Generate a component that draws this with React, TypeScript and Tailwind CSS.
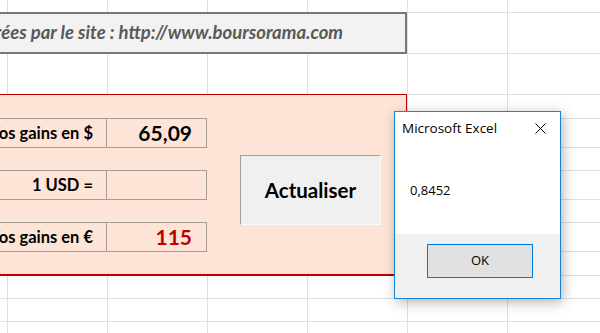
import React from "react";

const rowHeights = [13, 41, 41, 24, 29, 23, 29, 23, 29, 24, 23, 23, 12];
const colWidths = [8, 100, 100, 100, 100, 100, 100];

function Grid() {
  const cells: React.ReactNode[] = [];
  rowHeights.forEach((h, r) => {
    colWidths.forEach((w, c) => {
      cells.push(
        <div
          key={`${r}-${c}`}
          className="border-r border-b border-[#e0e0e0] box-border"
          style={{ width: w, height: h }}
        />
      );
    });
  });
  return (
    <div
      className="grid"
      style={{
        gridTemplateColumns: colWidths.map((w) => `${w}px`).join(" "),
        gridTemplateRows: rowHeights.map((h) => `${h}px`).join(" "),
      }}
    >
      {cells}
    </div>
  );
}

const calibri = { fontFamily: "Lato, 'Open Sans', sans-serif" };
const segoe = { fontFamily: "'Segoe UI', 'Open Sans', 'Noto Sans', sans-serif" };

function Row({ label, value, red }: { label: string; value: string; red?: boolean }) {
  return (
    <div className="flex h-[30px]">
      <div className="w-[200px] h-full border-t border-b border-r border-[#a79d96] flex items-center justify-end pr-[13px]">
        <span className="text-[16.5px] font-bold text-black whitespace-nowrap" style={calibri}>
          {label}
        </span>
      </div>
      <div className="w-[100px] h-full border-t border-b border-r border-[#a79d96] flex items-center justify-end pr-[14px]">
        <span
          className={`text-[21px] font-bold whitespace-nowrap ${red ? "text-[#c00000]" : "text-black"}`}
          style={calibri}
        >
          {value}
        </span>
      </div>
    </div>
  );
}

export default function App() {
  return (
    <div className="relative w-[600px] h-[333px] overflow-hidden bg-white">
      <Grid />

      {/* Banner shape */}
      <div className="absolute left-[-250px] top-[12px] w-[657px] h-[42px] bg-[#f2f2f2] border-2 border-[#777777] flex items-center justify-end pr-[62px]">
        <span className="text-[18.5px] font-bold italic text-[#595959] whitespace-nowrap" style={calibri}>
          Données récupérées par le site : http://www.boursorama.com
        </span>
      </div>

      {/* Pink panel */}
      <div className="absolute left-[-93px] top-[94px] w-[500px] h-[182px] bg-[#fde4d7] border-t border-r border-b-2 border-[#c00000]">
        <div className="flex items-start pt-[23px]">
          <div className="flex flex-col gap-[22px]">
            <Row label="Vos gains en $" value="65,09" />
            <Row label="1 USD =" value="" />
            <Row label="Vos gains en €" value="115" red />
          </div>
          <button className="ml-[33px] mt-[37px] w-[141px] h-[70px] bg-[#f0f0f0] border-t border-l border-[#a0a0a0] border-r border-r-[#fbfbfb] border-b border-b-[#fbfbfb] flex items-center justify-center">
            <span className="text-[20.5px] font-bold text-black" style={calibri}>
              Actualiser
            </span>
          </button>
        </div>
      </div>

      {/* Message box */}
      <div
        className="absolute left-[394px] top-[111px] w-[167px] h-[188px] border border-[#1a83d6] bg-white flex flex-col shadow-[2px_3px_12px_rgba(0,0,0,0.3)]"
        style={segoe}
      >
        <div className="flex items-center justify-between h-[33px] pl-[7px] pr-[14px]">
          <span className="text-[13.5px] text-black">Microsoft Excel</span>
          <svg width="11" height="11" viewBox="0 0 11 11">
            <path d="M0.5 0.5 L10.5 10.5 M10.5 0.5 L0.5 10.5" stroke="#000" strokeWidth="1" fill="none" />
          </svg>
        </div>
        <div className="flex-1 bg-white flex items-center pl-[15px] pt-[2px]">
          <span className="text-[13px] text-black">0,8452</span>
        </div>
        <div className="h-[64px] bg-[#f0f0f0] flex justify-end pr-[27px] pt-[10px]">
          <div className="w-[106px] h-[34px] bg-[#e1e1e1] border border-[#0078d7] flex items-center justify-center">
            <span className="text-[13px] text-black">OK</span>
          </div>
        </div>
      </div>
    </div>
  );
}
